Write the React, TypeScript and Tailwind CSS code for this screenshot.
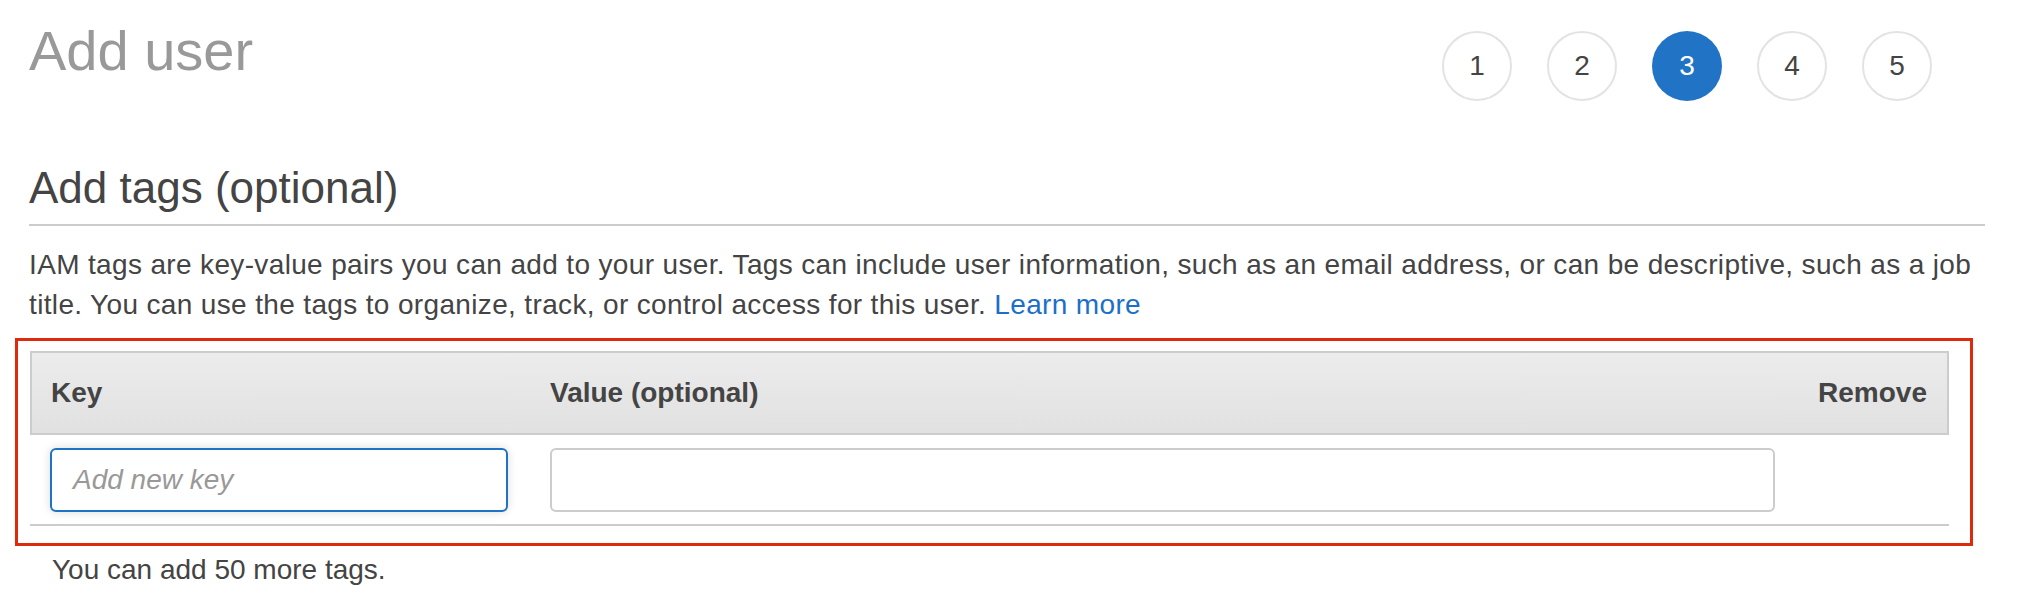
const steps = [1, 2, 3, 4, 5];

function StepCircle({ n, active }: { n: number; active?: boolean }) {
  return (
    <div
      className={
        active
          ? "flex size-[70px] items-center justify-center rounded-full bg-[#2073c5] text-[28px] text-white"
          : "flex size-[70px] items-center justify-center rounded-full border-2 border-[#e3e3e3] bg-white text-[28px] text-[#444]"
      }
    >
      {n}
    </div>
  );
}

function TagsTable() {
  return (
    <div className="-ml-[14px] mt-[13px] w-[1958px] border-[3px] border-[#de2a0c] pb-[17px] pl-[12px] pr-[21px] pt-[10px]">
      <div className="grid h-[84px] grid-cols-[458px_1225px_1fr] items-center gap-x-[42px] border-2 border-[#cccccc] bg-gradient-to-b from-[#ececed] to-[#e1e1e1] pl-[18px] pr-[20px] text-[28px] font-bold text-[#444]">
        <div className="pl-[1px]">Key</div>
        <div>Value (optional)</div>
        <div className="text-right">Remove</div>
      </div>
      <div className="grid grid-cols-[458px_1225px_1fr] gap-x-[42px] border-b-2 border-[#cccccc] pb-[12px] pl-[20px] pt-[13px]">
        <div className="flex h-[64px] items-center rounded-[6px] border-2 border-[#1f72c4] bg-white pl-[21px] shadow-[0_0_10px_rgba(0,0,0,0.14)]">
          <span className="text-[28px] italic text-[#999]">Add new key</span>
        </div>
        <div className="h-[64px] rounded-[6px] border-2 border-[#cccccc] bg-white" />
        <div />
      </div>
    </div>
  );
}

export default function App() {
  return (
    <div className="h-[590px] w-[2034px] overflow-hidden bg-white font-['Liberation_Sans',Arial,sans-serif]">
      <div className="w-[1985px] pl-[29px]">
        <div className="flex items-start justify-between pt-[23px]">
          <h1 className="text-[56px] leading-[56px] text-[#999]">Add user</h1>
          <div className="mr-[53px] mt-[8px] flex gap-[35px]">
            {steps.map((n) => (
              <StepCircle key={n} n={n} active={n === 3} />
            ))}
          </div>
        </div>

        <h2 className="mt-[65px] border-b-2 border-[#cccccc] pb-[14px] text-[44px] leading-[44px] text-[#444]">
          Add tags (optional)
        </h2>

        <p className="mt-[19px] text-[28px] leading-[40px] tracking-[0.35px] text-[#444]">
          IAM tags are key-value pairs you can add to your user. Tags can include user information, such as an email
          address, or can be descriptive, such as a job
          <br />
          title. You can use the tags to organize, track, or control access for this user.{" "}
          <span className="text-[#1b6fc8]">Learn more</span>
        </p>

        <TagsTable />

        <p className="mt-[4px] pl-[23px] text-[28px] leading-[40px] text-[#444]">You can add 50 more tags.</p>
      </div>
    </div>
  );
}
